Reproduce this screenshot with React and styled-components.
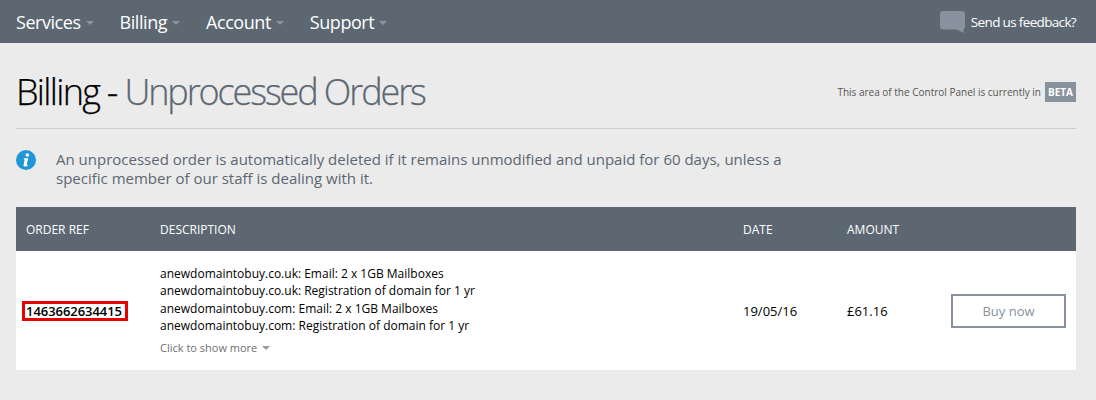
import { createGlobalStyle } from "styled-components";
import styled from "styled-components";

const GlobalStyle = createGlobalStyle`
  html, body {
    margin: 0;
    padding: 0;
    background: #ebebeb;
    font-family: "Open Sans", "Liberation Sans", sans-serif;
  }
`;

const navItems = ["Services", "Billing", "Account", "Support"];

const lines = [
  "anewdomaintobuy.co.uk: Email: 2 x 1GB Mailboxes",
  "anewdomaintobuy.co.uk: Registration of domain for 1 yr",
  "anewdomaintobuy.com: Email: 2 x 1GB Mailboxes",
  "anewdomaintobuy.com: Registration of domain for 1 yr",
];

const App = () => {
  return (
    <Page>
      <GlobalStyle />
      <Navbar>
        <NavList>
          {navItems.map((item) => (
            <NavItem key={item}>
              {item}
              <Caret $color="#8b96a2" />
            </NavItem>
          ))}
        </NavList>
        <Feedback>
          <svg width="25" height="22" viewBox="0 0 25 22">
            <path
              d="M3 0h19a3 3 0 0 1 3 3v13a3 3 0 0 1-1.500 2.500V22l-6.500-3.500H3a3 3 0 0 1-3-3V3a3 3 0 0 1 3-3z"
              fill="#87929e"
            />
          </svg>
          Send us feedback?
        </Feedback>
      </Navbar>
      <Content>
        <TitleRow>
          <Title>
            Billing - <TitleAccent>Unprocessed Orders</TitleAccent>
          </Title>
          <BetaNote>
            This area of the Control Panel is currently in
            <BetaBadge>BETA</BetaBadge>
          </BetaNote>
        </TitleRow>
        <Notice>
          <svg width="20" height="20" viewBox="0 0 20 20">
            <circle cx="10" cy="10" r="10" fill="#1e96d8" />
            <circle cx="11.300" cy="5" r="1.800" fill="#fff" />
            <path
              d="M8 8.300h4.200l-1.500 6.200c-.1.500.3.600 1.300.2l-.2 1c-1.400.6-2.200.8-3 .8-1 0-1.500-.6-1.300-1.500l1.200-5.300-1 -.3z"
              fill="#fff"
            />
          </svg>
          <NoticeText>
            An unprocessed order is automatically deleted if it remains
            unmodified and unpaid for 60 days, unless a specific member of our
            staff is dealing with it.
          </NoticeText>
        </Notice>
        <Table>
          <HeadRow>
            <span>ORDER REF</span>
            <span>DESCRIPTION</span>
            <span>DATE</span>
            <span>AMOUNT</span>
          </HeadRow>
          <BodyRow>
            <OrderRef>1463662634415</OrderRef>
            <Description>
              {lines.map((line) => (
                <DescLine key={line}>{line}</DescLine>
              ))}
              <ShowMore>
                Click to show more
                <Caret $color="#9a9a9a" />
              </ShowMore>
            </Description>
            <span>19/05/16</span>
            <span>£61.16</span>
            <BuyButton>Buy now</BuyButton>
          </BodyRow>
        </Table>
      </Content>
    </Page>
  );
};

const Page = styled.div`
  width: 1096px;
  height: 400px;
  overflow: hidden;
  background: #ebebeb;
`;

const Navbar = styled.div`
  height: 43px;
  background: #5c6772;
  display: flex;
  align-items: center;
  justify-content: space-between;
  padding: 0 20px 0 16px;
  color: #fff;
`;

const NavList = styled.div`
  display: flex;
  gap: 26px;
`;

const NavItem = styled.div`
  font-size: 18px;
  letter-spacing: -0.45px;
  display: flex;
  align-items: center;
`;

const Caret = styled.i`
  display: inline-block;
  width: 0;
  height: 0;
  margin-left: 5px;
  margin-top: 2px;
  border-left: 4px solid transparent;
  border-right: 4px solid transparent;
  border-top: 4px solid ${(p) => p.$color};
`;

const Feedback = styled.div`
  display: flex;
  align-items: center;
  gap: 6px;
  font-size: 13.500px;
  letter-spacing: -0.66px;
`;

const Content = styled.div`
  padding: 0 20px 0 16px;
`;

const TitleRow = styled.div`
  height: 86px;
  box-sizing: border-box;
  padding-top: 12px;
  border-bottom: 1px solid #cdcdcd;
  display: flex;
  align-items: center;
  justify-content: space-between;
`;

const Title = styled.h1`
  margin: 0;
  font-size: 36px;
  font-weight: 300;
  letter-spacing: -1.7px;
  -webkit-text-stroke: 0.25px currentColor;
  color: #000;
`;

const TitleAccent = styled.span`
  color: #5c6772;
  letter-spacing: -2.1px;
`;

const BetaNote = styled.div`
  display: flex;
  align-items: center;
  gap: 4px;
  font-size: 10px;
  color: #555;
`;

const BetaBadge = styled.span`
  background: #87929e;
  color: #fff;
  font-weight: 700;
  padding: 0 3px;
  line-height: 20px;
`;

const Notice = styled.div`
  display: flex;
  gap: 20px;
  height: 78px;
  padding-top: 21px;
  box-sizing: border-box;
`;

const NoticeText = styled.p`
  margin: 0;
  width: 760px;
  font-size: 15px;
  line-height: 19px;
  color: #5c6772;
`;

const Table = styled.div`
  background: #fff;
`;

const columns = "134px 583px 104px 104px 1fr";

const HeadRow = styled.div`
  display: grid;
  grid-template-columns: ${columns};
  align-items: center;
  height: 44px;
  padding-left: 10px;
  background: #5c6772;
  color: #fff;
  font-size: 12px;
`;

const BodyRow = styled.div`
  display: grid;
  grid-template-columns: ${columns};
  align-items: center;
  height: 119px;
  padding-left: 10px;
  font-size: 13px;
  color: #000;
`;

const OrderRef = styled.span`
  justify-self: start;
  margin-left: -4px;
  padding: 0 3px 0 1px;
  border: 3px solid #e60000;
  font-weight: 600;
  font-size: 13px;
  letter-spacing: -0.05px;
  line-height: 14px;
`;

const Description = styled.div`
  font-size: 12px;
  padding-bottom: 2px;
`;

const DescLine = styled.div`
  line-height: 17.500px;
`;

const ShowMore = styled.div`
  display: flex;
  align-items: center;
  margin-top: 5px;
  font-size: 11px;
  color: #6f6f6f;
`;

const BuyButton = styled.button`
  width: 115px;
  height: 34px;
  box-sizing: border-box;
  border: 2px solid #87929e;
  background: #fff;
  color: #87929e;
  font: inherit;
`;

export default App;
